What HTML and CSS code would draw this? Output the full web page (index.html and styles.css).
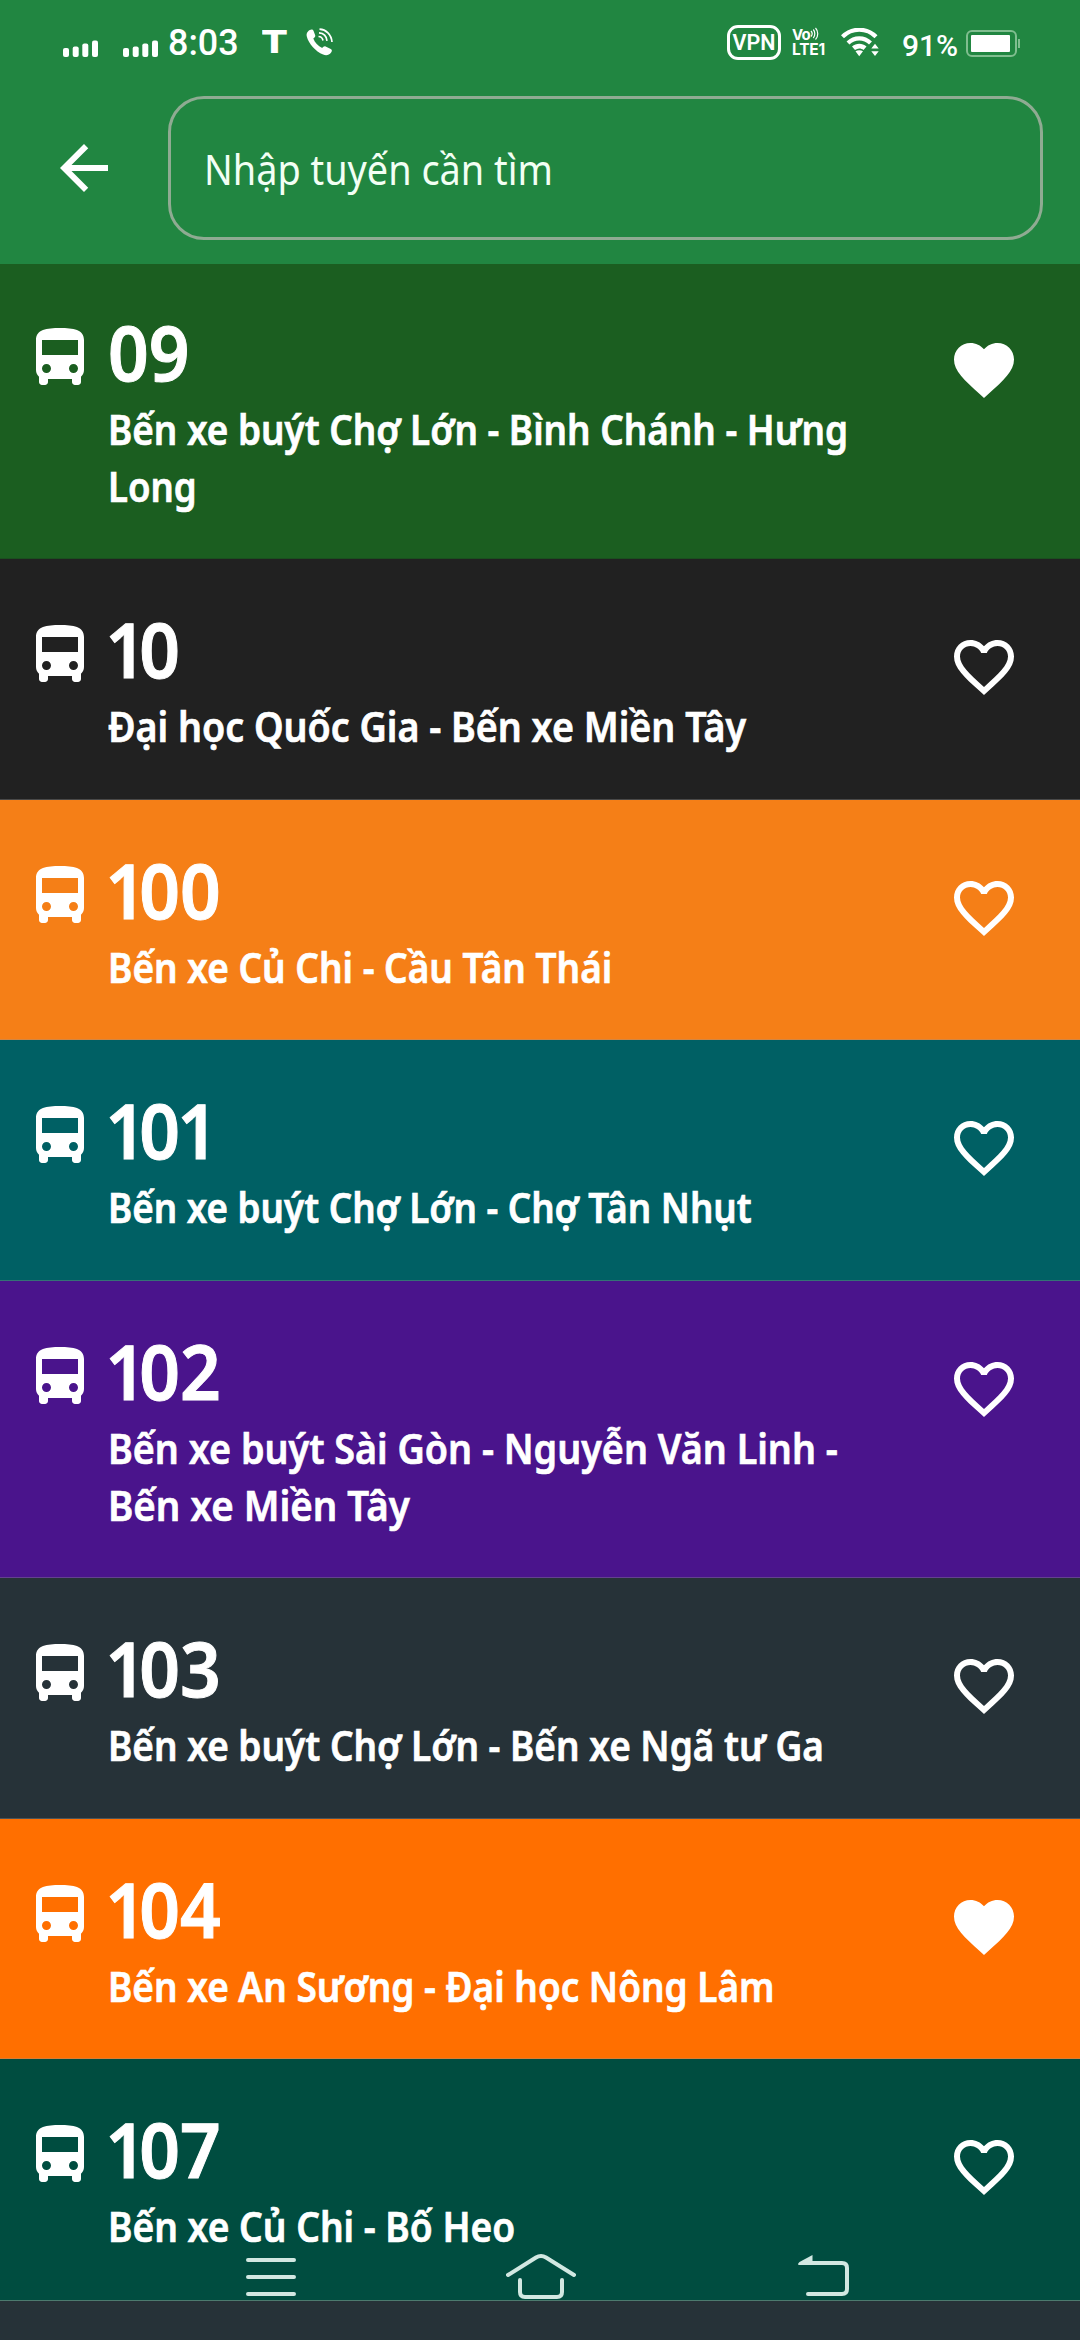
FILE: index.html
```html
<!DOCTYPE html>
<html lang="vi">
<head>
<meta charset="utf-8">
<title>Tuyến xe buýt</title>
<link rel="stylesheet" href="styles.css">
</head>
<body>
<svg width="0" height="0" class="defs" aria-hidden="true">
  <symbol id="bus" viewBox="0 0 24 24"><path d="M4 16c0 .88.39 1.67 1 2.22V20c0 .55.45 1 1 1h1c.55 0 1-.45 1-1v-1h8v1c0 .55.45 1 1 1h1c.55 0 1-.45 1-1v-1.78c.61-.55 1-1.34 1-2.22V6c0-3.5-3.58-4-8-4s-8 .5-8 4v10zm3.5 1c-.83 0-1.500-.67-1.500-1.500S6.670 14 7.500 14s1.500.67 1.500 1.500S8.330 17 7.500 17zm9 0c-.83 0-1.500-.67-1.500-1.500s.67-1.500 1.500-1.500 1.500.67 1.500 1.500-.67 1.500-1.500 1.500zM18 11H6V6h12v5z"/></symbol>
  <symbol id="heart" viewBox="0 0 24 24"><path d="M12 21.350l-1.450-1.320C5.400 15.360 2 12.280 2 8.500 2 5.420 4.420 3 7.500 3c1.740 0 3.410.81 4.500 2.090C13.090 3.810 14.760 3 16.500 3 19.580 3 22 5.420 22 8.500c0 3.780-3.400 6.860-8.550 11.540L12 21.350z"/></symbol>
  <symbol id="heart-line" viewBox="0 0 24 24"><path d="M16.500 3c-1.740 0-3.410.81-4.500 2.090C10.910 3.810 9.240 3 7.500 3 4.420 3 2 5.420 2 8.500c0 3.780 3.400 6.860 8.550 11.540L12 21.350l1.450-1.320C18.600 15.360 22 12.280 22 8.500 22 5.420 19.580 3 16.500 3zm-4.400 15.550l-.1.1-.1-.1C7.140 14.240 4 11.390 4 8.500 4 6.500 5.500 5 7.500 5c1.540 0 3.040.99 3.570 2.360h1.870C13.460 5.990 14.960 5 16.500 5c2 0 3.500 1.500 3.500 3.500 0 2.890-3.140 5.740-7.900 10.050z"/></symbol>
</svg>
<div class="screen">
  <header class="top">
    <div class="status">
      <svg class="signal" viewBox="0 0 36 17"><rect y="8" width="6" height="9" rx="2"/><rect x="9.700" y="6.500" width="6" height="10.500" rx="2"/><rect x="19.300" y="3.500" width="6" height="13.500" rx="2"/><rect x="29" y=".5" width="6" height="16.500" rx="2"/></svg>
      <svg class="signal second" viewBox="0 0 36 17"><rect y="8" width="6" height="9" rx="2"/><rect x="9.700" y="6.500" width="6" height="10.500" rx="2"/><rect x="19.300" y="3.500" width="6" height="13.500" rx="2"/><rect x="29" y=".5" width="6" height="16.500" rx="2"/></svg>
      <span class="time">8:03</span>
      <span class="tee">T</span>
      <svg class="call" viewBox="0 0 28 28"><path d="M2 3.500C4 1.500 6.500.8 7.500 2.800l1.700 4.400c.4 1.400-.5 2.300-1.900 3.200 1.500 4 4.800 7.600 8.900 9.700 1-1.200 2-2.200 3.400-1.600l5.200 2.500c1.500.8 1.300 2.200.3 3.500-2 2.700-5 3.300-8 2C9.500 23.500 2.500 15.500.8 8.500.3 6.500.7 4.800 2 3.500z"/><g class="waves"><path d="M12.500 8.500c2.500 0 4 1.500 4.500 4"/><path d="M13 4.800c4.500.3 7.500 3.200 8 8"/><path d="M13.500 1.200c6.500.3 11.800 5 12.500 12.800"/></g></svg>
      <span class="vpn"><span>VPN</span></span>
      <span class="volte"><span class="vo">Vo<svg viewBox="0 0 9 13"><path d="M1 4c1.300 1.500 1.300 4 0 5.500M3.300 2.500c2 2.300 2 6.200 0 8.500M5.500 1c3 3.200 3 8.300 0 11.500"/></svg></span><span class="lte">LTE1</span></span>
      <svg class="wifi" viewBox="0 0 38 29"><g class="arcs"><path d="M1.500 8.800C11-.6 25.500-.6 35 8.800"/><path d="M7 15c6.500-6.300 16-6.300 22.500 0"/></g><path d="M11 18.500c4.300-3.600 10.200-3.600 14.500 0l-3 3.500c-2.600-2-5.800-2-8.500 0zM14.500 23.300c2.200-1.500 5.300-1.500 7.500 0l-3.800 5z"/><path d="M30.300 20.500l3.700-4.700 3.700 4.700zM30.300 23.300h7.400L34 28z"/></svg>
      <span class="pct">91%</span>
      <span class="battery"><span class="charge"></span></span><span class="nub"></span>
    </div>
    <div class="bar">
      <svg class="back" viewBox="0 0 24 24"><path d="M20 11H7.830l5.590-5.590L12 4l-8 8 8 8 1.410-1.410L7.830 13H20v-2z"/></svg>
      <div class="search"><span class="fit" style="--fit:.901">Nhập tuyến cần tìm</span></div>
    </div>
  </header>
  <main class="routes">
    <section class="route first green"><svg class="ico"><use href="#bus"/></svg><div class="info"><h2>09</h2><p><span class="fit" style="--fit:.8775">Bến xe buýt Chợ Lớn - Bình Chánh - Hưng</span><span class="fit" style="--fit:.870">Long</span></p></div><svg class="ico fav"><use href="#heart"/></svg></section>
    <section class="route black"><svg class="ico"><use href="#bus"/></svg><div class="info"><h2><span class="one">1</span>0</h2><p><span class="fit" style="--fit:.896">Đại học Quốc Gia - Bến xe Miền Tây</span></p></div><svg class="ico fav"><use href="#heart-line"/></svg></section>
    <section class="route amber"><svg class="ico"><use href="#bus"/></svg><div class="info"><h2><span class="one">1</span>00</h2><p><span class="fit" style="--fit:.881">Bến xe Củ Chi - Cầu Tân Thái</span></p></div><svg class="ico fav"><use href="#heart-line"/></svg></section>
    <section class="route teal"><svg class="ico"><use href="#bus"/></svg><div class="info"><h2><span class="one">1</span>0<span class="one">1</span></h2><p><span class="fit" style="--fit:.875">Bến xe buýt Chợ Lớn - Chợ Tân Nhụt</span></p></div><svg class="ico fav"><use href="#heart-line"/></svg></section>
    <section class="route purple"><svg class="ico"><use href="#bus"/></svg><div class="info"><h2><span class="one">1</span>02</h2><p><span class="fit" style="--fit:.897">Bến xe buýt Sài Gòn - Nguyễn Văn Linh -</span><span class="fit" style="--fit:.916">Bến xe Miền Tây</span></p></div><svg class="ico fav"><use href="#heart-line"/></svg></section>
    <section class="route slate"><svg class="ico"><use href="#bus"/></svg><div class="info"><h2><span class="one">1</span>03</h2><p><span class="fit" style="--fit:.880">Bến xe buýt Chợ Lớn - Bến xe Ngã tư Ga</span></p></div><svg class="ico fav"><use href="#heart-line"/></svg></section>
    <section class="route orange"><svg class="ico"><use href="#bus"/></svg><div class="info"><h2><span class="one">1</span>04</h2><p><span class="fit" style="--fit:.880">Bến xe An Sương - Đại học Nông Lâm</span></p></div><svg class="ico fav"><use href="#heart"/></svg></section>
    <section class="route pine"><svg class="ico"><use href="#bus"/></svg><div class="info"><h2><span class="one">1</span>07</h2><p><span class="fit" style="--fit:.885">Bến xe Củ Chi - Bố Heo</span></p></div><svg class="ico fav"><use href="#heart-line"/></svg></section>
    <section class="route slate"></section>
  </main>
  <nav class="keys">
    <svg viewBox="0 0 50 46"><path d="M2 7h46M2 24h46M2 41h46"/></svg>
    <svg class="home" viewBox="0 0 70 46"><path d="M2 22L30 4.500q5-3 10 0L68 22M14 27v12q0 5 5 5h32q5 0 5-5V27"/></svg>
    <svg class="ret" viewBox="0 0 52 46"><path d="M8 10h36q5 0 5 5v21q0 5-5 5H10"/><path class="tip" d="M0 11.500Q0 10 1.500 9L14.500 2v10H1z"/></svg>
  </nav>
</div>
</body>
</html>
```
FILE: styles.css
```css
* { box-sizing: border-box; }
body { margin: 0; font-family: "Noto Sans", sans-serif; color: #fff; }
svg { display: block; fill: #fff; flex: none; }
.defs { position: absolute; }
.screen { position: relative; width: 1080px; height: 2340px; overflow: hidden; background: #263238; display: flex; flex-direction: column; }

.top { height: 264px; flex: none; background: #218641; }
.status { height: 96px; padding-left: 63px; display: flex; align-items: flex-start; font-family: Roboto, sans-serif; }
.signal { width: 36px; height: 17px; margin-top: 40px; }
.second { margin-left: 24px; }
.time { width: 70px; margin: 21px 0 0 9px; font-size: 37px; line-height: 44px; font-weight: 500; transform: scaleX(.97); transform-origin: 0 0; }
.tee { width: 24px; margin: 24px 0 0 24px; font: bold 32px/37px "DejaVu Sans", sans-serif; transform: scaleX(1.14); transform-origin: 0 0; }
.call { width: 28px; height: 28px; margin: 28px 0 0 20px; }
.waves { fill: none; stroke: #fff; stroke-width: 1.7; }
.vpn { width: 54px; height: 35px; margin: 25px 0 0 393px; border: 3px solid #fff; border-radius: 11px; display: flex; align-items: center; justify-content: center; font-size: 21.500px; font-weight: 600; }
.volte { width: 34px; margin: 27px 0 0 11px; display: flex; flex-direction: column; font-family: Inter, sans-serif; font-weight: 700; }
.vo { display: flex; font-size: 15px; line-height: 15px; height: 15px; letter-spacing: -.8px; }
.vo svg { width: 9px; height: 13px; fill: none; stroke: #fff; stroke-width: 1.2; }
.lte { font-size: 15.500px; line-height: 16px; letter-spacing: -.2px; }
.wifi { width: 38px; height: 29px; margin: 28px 0 0 15px; }
.arcs { fill: none; stroke: #fff; stroke-width: 4.200; }
.pct { width: 54px; margin: 28px 0 0 23px; font-size: 30px; line-height: 36px; font-weight: 500; }
.battery { width: 51px; height: 27px; margin: 30px 0 0 10px; border: 2px solid #80be8f; border-radius: 6px; padding: 3px; }
.charge { display: block; width: 39px; height: 17px; background: #fff; border-radius: 1px; }
.nub { width: 2px; height: 9px; margin: 39px 0 0 1px; background: #80be8f; }

.bar { display: flex; align-items: center; height: 144px; padding: 0 37px 0 48px; }
.back { width: 72px; height: 72px; }
.search { flex: 1; height: 144px; margin-left: 48px; border: 3px solid #8fab92; border-radius: 36px; padding: 0 33px; display: flex; align-items: center; font-size: 42px; color: #f2fff4; }
.fit { display: block; width: max-content; white-space: nowrap; transform: scaleX(var(--fit)); transform-origin: 0 50%; }

.routes { flex: 1; }
.route { height: 240.500px; padding: 60px 60px 0 24px; display: flex; align-items: flex-start; border-bottom: 1px solid rgba(150, 150, 150, .35); }
.first { height: 295px; padding-top: 58px; }
.ico { width: 72px; height: 72px; }
.fav { margin-top: 12px; }
.info { flex: 1; min-width: 0; margin-top: -12px; padding-left: 12px; -webkit-text-stroke: .7px #fff; }
h2 { margin: 0; font-size: 75px; line-height: 84px; height: 83px; font-weight: 650; transform: scaleX(.95); transform-origin: 0 50%; -webkit-text-stroke: 1px #fff; }
.one { margin-left: -3px; letter-spacing: -7px; }
p { margin: 0; padding-top: 7px; font-size: 42px; line-height: 57px; font-weight: 650; }
.green { background: #1b5e20; border-bottom-color: #1b4f1f; }
.black { background: #212121; }
.amber { background: #f57f17; }
.teal { background: #006064; }
.purple { background: #4a148c; height: 297.500px; }
.slate { background: #263238; }
.orange { background: #ff6f00; }
.pine { background: #004d40; border-bottom-color: #4c7a6e; height: 242px; }

.keys { position: absolute; left: 246px; top: 2253px; display: flex; }
.keys svg { height: 46px; width: 50px; fill: none; stroke: #d2e8e2; stroke-width: 4; stroke-linecap: round; }
.keys .home { width: 70px; margin-left: 210px; }
.keys .ret { width: 52px; margin-left: 222px; }
.keys .tip { fill: #d2e8e2; stroke: none; }
```
